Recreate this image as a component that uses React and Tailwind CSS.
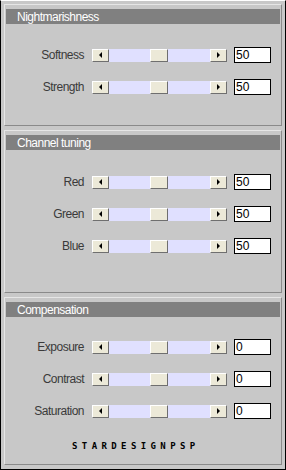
const font = { fontFamily: '"Liberation Sans", Arial, sans-serif' };

function ArrowButton({ dir }) {
  return (
    <div className="flex h-[13px] w-[17px] shrink-0 items-center justify-center border border-t-white border-l-white border-r-[#6f6f6f] border-b-[#6f6f6f] bg-[#ece9d8]">
      {dir === 'left' ? (
        <div className="h-0 w-0 border-y-[3px] border-r-[3px] border-y-transparent border-r-black" />
      ) : (
        <div className="h-0 w-0 border-y-[3px] border-l-[3px] border-y-transparent border-l-black" />
      )}
    </div>
  );
}

function SliderRow({ label, value }) {
  return (
    <div className="flex h-4 items-center">
      <div className="w-[79px] pr-[1px] text-right text-[12px] tracking-[-0.5px] text-[#3a3a3a]">{label}</div>
      <div className="ml-[7px] flex items-center">
        <ArrowButton dir="left" />
        <div className="flex h-[13px] w-[101px] items-center bg-[#e0e0ff]">
          <div className="ml-[41px] h-[13px] w-[18px] border border-t-white border-l-white border-r-[#6f6f6f] border-b-[#6f6f6f] bg-[#ece9d8]" />
        </div>
        <ArrowButton dir="right" />
      </div>
      <div className="ml-[7px] flex h-4 w-[37px] items-center border border-black bg-white pl-[1px] text-[12px] leading-none text-black">
        {value}
      </div>
    </div>
  );
}

function Panel({ title, height, top, children }) {
  return (
    <div
      className="flex flex-col border border-t-[#e6e6e6] border-l-[#e6e6e6] border-r-[#8a8a8a] border-b-[#8a8a8a] px-[1px]"
      style={{ height }}
    >
      <div className="mt-[4px] flex h-[15px] items-center bg-[#808080] pl-[11px] text-[12px] tracking-[-0.5px] text-white">
        {title}
      </div>
      <div className="flex flex-col gap-4" style={{ marginTop: top }}>
        {children}
      </div>
    </div>
  );
}

export default function App() {
  return (
    <div className="h-[470px] w-[286px] bg-[#c8c8c8]" style={font}>
      <div className="flex h-full flex-col gap-[4px] border border-t-white border-l-black border-r-black border-b-black px-[3px] pt-[3px]">
        <Panel title="Nightmarishness" height={122} top={23}>
          <SliderRow label="Softness" value="50" />
          <SliderRow label="Strength" value="50" />
        </Panel>
        <Panel title="Channel tuning" height={163} top={24}>
          <SliderRow label="Red" value="50" />
          <SliderRow label="Green" value="50" />
          <SliderRow label="Blue" value="50" />
        </Panel>
        <Panel title="Compensation" height={168} top={22}>
          <SliderRow label="Exposure" value="0" />
          <SliderRow label="Contrast" value="0" />
          <SliderRow label="Saturation" value="0" />
          <div
            className="mt-[7px] pl-[66px] text-[9px] leading-none font-bold tracking-[4.4px] text-black"
            style={{ fontFamily: '"DejaVu Sans Mono", monospace' }}
          >
            STARDESIGNPSP
          </div>
        </Panel>
      </div>
    </div>
  );
}
